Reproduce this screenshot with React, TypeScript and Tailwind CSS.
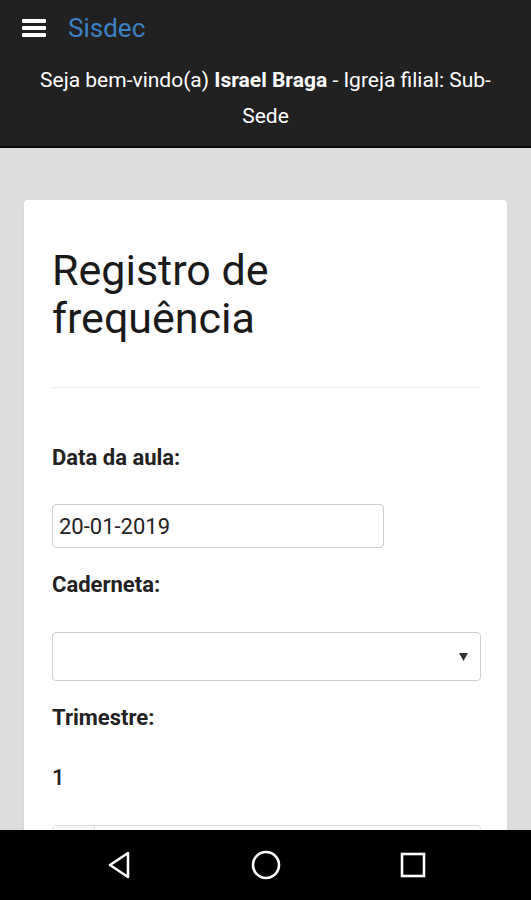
import React from 'react';

const Hamburger: React.FC = () => (
  <div className="flex flex-col gap-[3px] w-[24px]">
    <span className="block h-[4px] rounded-[1px] bg-white" />
    <span className="block h-[4px] rounded-[1px] bg-white" />
    <span className="block h-[4px] rounded-[1px] bg-white" />
  </div>
);

const Label: React.FC<{ children: React.ReactNode }> = ({ children }) => (
  <p className="text-[22px] leading-[28px] font-bold text-[#222]">{children}</p>
);

const NavBar: React.FC = () => (
  <div className="fixed bottom-0 left-0 right-0 h-[70px] bg-black flex items-center justify-center gap-[117px]">
    <svg width="30" height="30" viewBox="0 0 30 30" fill="none">
      <path d="M24 3 L6 15 L24 27 Z" stroke="white" strokeWidth="2.6" strokeLinejoin="round" />
    </svg>
    <svg width="30" height="30" viewBox="0 0 30 30" fill="none">
      <circle cx="15" cy="15" r="13" stroke="white" strokeWidth="2.6" />
    </svg>
    <svg width="30" height="30" viewBox="0 0 30 30" fill="none">
      <rect x="4" y="4" width="22" height="22" stroke="white" strokeWidth="2.6" />
    </svg>
  </div>
);

export default function App() {
  return (
    <div className="min-h-screen bg-[#dcdcdc] font-['Roboto','Liberation_Sans',sans-serif] pb-[80px]">
      <header className="bg-[#212121] border-b-2 border-[#080808] pb-[12px]">
        <div className="flex items-center h-[56px] pl-[22px]">
          <Hamburger />
          <span className="ml-[22px] text-[26px] text-[#3b82c4]">Sisdec</span>
        </div>
        <p className="mt-[6px] px-[30px] text-center text-white text-[21px] leading-[36px]">
          Seja bem-vindo(a) <b>Israel Braga</b> - Igreja filial: Sub-Sede
        </p>
      </header>

      <main className="mx-[24px] mt-[52px] bg-white rounded-[4px] shadow-[0_1px_2px_rgba(0,0,0,0.08)] pl-[28px] pr-[26px] pt-[46px]">
        <h1 className="text-[43px] leading-[48px] text-[#1a1a1a] pr-[120px]">Registro de frequência</h1>
        <hr className="mt-[45px] border-t border-[#eeeeee]" />

        <div className="mt-[56px]">
          <Label>Data da aula:</Label>
        </div>
        <div className="mt-[32px] w-[332px] h-[44px] border border-[#cfcfcf] rounded-[4px] flex items-center px-[6px] text-[22px] text-[#222]">
          20-01-2019
        </div>

        <div className="mt-[23px]">
          <Label>Caderneta:</Label>
        </div>
        <div className="mt-[33px] h-[49px] border border-[#cfcfcf] rounded-[4px] flex items-center justify-end pr-[12px]">
          <svg width="9" height="8" viewBox="0 0 9 8">
            <path d="M0 0 H9 L4.5 8 Z" fill="#333" />
          </svg>
        </div>

        <div className="mt-[23px]">
          <Label>Trimestre:</Label>
        </div>
        <p className="mt-[32px] text-[22px] leading-[28px] font-medium text-[#222]">1</p>

        <div className="mt-[33px] h-[46px] border border-[#dcdcdc] rounded-[4px] flex">
          <div className="w-[42px] border-r border-[#dcdcdc] bg-[#f6f6f6]" />
          <div className="flex-1" />
        </div>
        <div className="h-[40px]" />
      </main>

      <NavBar />
    </div>
  );
}
